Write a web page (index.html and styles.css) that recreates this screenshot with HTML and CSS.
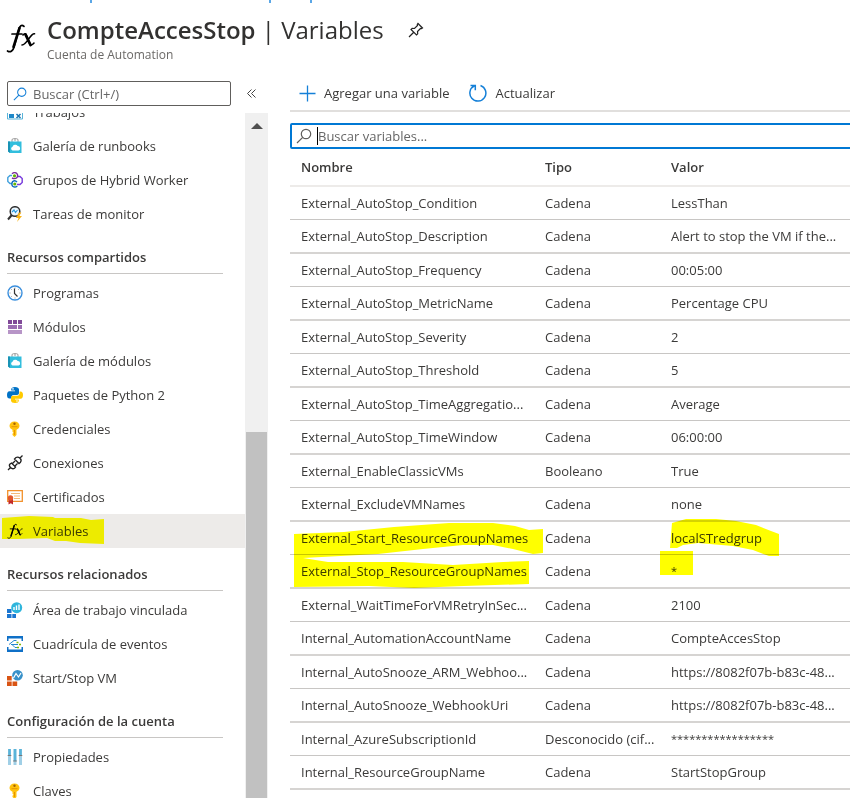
FILE: index.html
```html
<!DOCTYPE html>
<html lang="es">
<head>
<meta charset="utf-8">
<meta name="viewport" content="width=device-width, initial-scale=1">
<title>CompteAccesStop | Variables</title>
<link rel="stylesheet" href="styles.css">
</head>
<body>
<svg class="defs" aria-hidden="true">
  <defs>
    <symbol id="fx" viewBox="0 0 30 30">
      <g fill="none" stroke="currentColor" stroke-linecap="round">
        <path stroke-width="2.6" d="M13.5 5 7.5 24"/>
        <path stroke-width="1.7" d="M18 3.4C15.6 1 13.8 3 13 6L8.2 23.5C7.200 27.500 4.500 30 1.500 28M6 11h10"/>
        <path stroke-width="2.800" d="M19.500 11.500l5 10.500"/>
        <path stroke-width="1.600" d="M17 12c1.500-2 3-1.500 3.600.5l3 8c.8 2 2.400 2 4.400-.5M28.500 10.800c-4-.8-7.500 11.200-12.500 11.200"/>
      </g>
    </symbol>
    <symbol id="lens" viewBox="0 0 16 16">
      <circle cx="10" cy="6" r="4.700" fill="none" stroke="currentColor" stroke-width="1.200"/>
      <path d="M6.700 9.400 1 15" stroke="currentColor" stroke-width="1.200"/>
    </symbol>
    <symbol id="bag" viewBox="0 0 16 16">
      <path d="M5 4V2Q5 .7 6.500.7h3Q11 .7 11 2v2M8 .7V3" fill="none" stroke="#9a9a9a"/>
      <path d="M1 3.500h13.500V15H3L1 13.500z" fill="#32bedd"/><path d="M1 3.500h2V15l-2-1.500z" fill="#1a93b5"/>
      <path d="M5.500 12.500a2 2 0 0 1 0-3.800 2.900 2.900 0 0 1 5.200-.7 2.300 2.300 0 0 1 .8 4.500z" fill="#fff"/>
    </symbol>
    <symbol id="key" viewBox="0 0 16 16">
      <path d="M7.500.5c3 0 5 2 5 4.300 0 2-1.200 3.300-3 3.900v5.300L7.500 16l-2-2v-1.200l1-1-1-1V8.700c-1.800-.6-3-1.900-3-3.900 0-2.300 2-4.300 5-4.300z" fill="#ffc20e"/>
      <circle cx="7.500" cy="2.800" r="1.200" fill="#a66300"/><path d="M4.500 5.700h6M7.500 9v5" stroke="#e69500" stroke-width="1"/>
    </symbol>
  </defs>
</svg>

<div class="page">
  <svg class="ticks" width="320" height="4" aria-hidden="true"><path d="M91 0v3M270 0v3M311 0v3" stroke="#5ba7e6" stroke-width="2"/></svg>
  <header class="header">
    <svg class="header-icon" aria-hidden="true"><use href="#fx"/></svg>
    <div>
      <h1 class="title"><strong>CompteAccesStop</strong> | Variables</h1>
      <p class="subtitle">Cuenta de Automation</p>
    </div>
    <button class="icon-button pin" aria-label="Anclar">
      <svg width="16" height="16" viewBox="0 0 16 16" fill="none" stroke="#222" stroke-width="1.200"><path d="M10 1.500 14.500 6l-1 .7-1-.2-3 3 .2 2.300-1.200 1.200-5.500-5.500 1.200-1.200 2.300.2 3-3-.2-1zM5.500 10.500 1 15"/></svg>
    </button>
  </header>

  <div class="content">
    <aside class="sidebar">
      <div class="menu-search">
        <div class="search-box">
          <svg width="14" height="14" class="blue" aria-hidden="true"><use href="#lens"/></svg>
          <input type="text" placeholder="Buscar (Ctrl+/)" aria-label="Buscar en el menú">
        </div>
        <button class="icon-button" aria-label="Contraer menú">
          <svg width="9" height="9" viewBox="0 0 9 9" fill="none" stroke="#444"><path d="M4.500.5l-4 4 4 4M8.500.5l-4 4 4 4"/></svg>
        </button>
      </div>
      <div class="menu-body">
        <nav class="menu" aria-label="Menú de recursos">
          <a href="#" class="item"><svg viewBox="0 0 16 16"><path d="M.5 1h15v14H.5z" fill="#fff" stroke="#59b4d9"/><path d="M2 10h5v4H2z" fill="#1e88c9"/><path d="M9.500 10l4 4m0-4-4 4" stroke="#1673b1" stroke-width="1.500"/></svg>Trabajos</a>
          <a href="#" class="item"><svg><use href="#bag"/></svg>Galería de runbooks</a>
          <a href="#" class="item"><svg viewBox="0 0 16 16" fill="none" stroke-width="1.400"><path d="M5 3.500H3L.8 5.500v4L3 11.500h2" stroke="#41a0dc"/><path d="M11 4.500h2l2.200 2v4l-2.200 2h-3" stroke="#773adc"/><path d="M5 1.800Q7-.2 9.500 1.200 11.500 3 10 5.500 8 7.500 5 6" stroke="#7a2f9c"/><path d="M10 10Q8 7.800 5.700 9.500 4 12 5.700 14.300 8 16 10.300 14" stroke="#0f6cbd"/><circle cx="7.500" cy="3.800" r="1.600" fill="#65b500"/><circle cx="7.800" cy="12" r="1.600" fill="#65b500"/></svg>Grupos de Hybrid Worker</a>
          <a href="#" class="item"><svg viewBox="0 0 16 16"><circle cx="8" cy="5.500" r="4.800" fill="#eef8ff" stroke="#333" stroke-width="1.500"/><path d="M4.800 9 1 13.500" stroke="#333" stroke-width="2"/><path d="M5 6l2-2 1.500 2.500L10.500 4" fill="none" stroke="#2c9be0" stroke-width="1.200"/><path d="M12 6.500 9 12h2.500L10 16l5-6h-2.700l2-3.500z" fill="#fbb416"/></svg>Tareas de monitor</a>

          <h2 class="group">Recursos compartidos</h2>
          <a href="#" class="item"><svg viewBox="0 0 16 16"><circle cx="8" cy="8" r="7" fill="#fff" stroke="#3b8fdd" stroke-width="1.400"/><path d="M8 2.500v1M8 12.500v1M2.500 8h1M12.500 8h1M4 4l.7.7M11.300 4.700 12 4M4 12l.7-.7" stroke="#999"/><path d="M7.500 3.500V8.500l3 3" fill="none" stroke="#333" stroke-width="1.200"/></svg>Programas</a>
          <a href="#" class="item"><svg viewBox="0 0 16 16"><path d="M1 1h4v4H1zM6 1h4v4H6zM11 1h4v4h-4z" fill="#804998"/><path d="M1 6h9v4H1zM11 6h4v4h-4z" fill="#9b6cb2"/><path d="M1 11h14v4H1z" fill="#b795c7"/></svg>Módulos</a>
          <a href="#" class="item"><svg><use href="#bag"/></svg>Galería de módulos</a>
          <a href="#" class="item"><svg viewBox="0 0 16 16"><path d="M4.200 2.500Q4.200 0 8 0t4 2.500v3.700Q12 8 10 8H6.500Q4.500 8 4.500 10v1.500h-2Q0 11.500 0 8t2.500-3.700H8v-.8H4.200z" fill="#0072c6"/><path d="M11.800 13.500Q11.800 16 8 16t-4-2.500V10.500Q4 8.700 6 8.700h4Q12.500 8.700 12.500 6.500V4.500h1Q16 4.500 16 8t-2.500 3.700H8v.8h3.800z" fill="#ffca00"/><circle cx="6" cy="1.900" r=".8" fill="#fff"/><circle cx="10" cy="14" r=".8" fill="#fff"/></svg>Paquetes de Python 2</a>
          <a href="#" class="item"><svg><use href="#key"/></svg>Credenciales</a>
          <a href="#" class="item"><svg viewBox="0 0 16 16" fill="none" stroke="#222" stroke-width="1.300"><path d="M1 15l2.500-2.500M12.500 3.500 15.500.5M4.500 8l4 4-1 1.200Q5.500 14.500 3.500 12.500T3 9zM7.500 4l4.500 4.500 1.500-1.300Q15 5 13 3.200T9 2.500zM5.500 8.500 8 6M8 11l2.500-2.500"/></svg>Conexiones</a>
          <a href="#" class="item"><svg viewBox="0 0 16 16"><path d="M.7 1.700h14.600v10.600H.7z" fill="#fff" stroke="#f2912c" stroke-width="1.300"/><path d="M4 4.500h9M7 7h6M7 9.500h6" stroke="#f5b877"/><path d="M1.500 10h4.500v5.500l-2.200-1.300-2.300 1.300z" fill="#c12a2a"/><circle cx="3.500" cy="9" r="2.700" fill="#e2572b"/></svg>Certificados</a>
          <a href="#" class="item selected" aria-current="page"><svg class="ink"><use href="#fx"/></svg>Variables
            <svg class="marker marker-menu" viewBox="0 0 102 28" aria-hidden="true"><path d="M0 2 27 0l24 1 2 1h26l10 2 13-1v25l-24-1-14-2H53l-8-3-30 1H0z"/></svg>
          </a>

          <h2 class="group">Recursos relacionados</h2>
          <a href="#" class="item"><svg viewBox="0 0 16 16"><path d="M0 7h4.500v4H0zM0 12h4.500v4H0zM5.300 12H9v4H5.300z" fill="#1b76d1"/><circle cx="9.700" cy="5.700" r="5.500" fill="#2eb5dc"/><path d="M7 5v3M9.500 3.500V8M12 2.500V8" stroke="#fff" stroke-width="1.400"/></svg>Área de trabajo vinculada</a>
          <a href="#" class="item"><svg viewBox="0 0 16 16"><path d="M0 0h16v5h-1.500V2.500h-13V5H0zM0 11h1.500v2.500h13V11H16v5H0z" fill="#0f70c7"/><path d="M2 8.500 7 4.500h2.500M4 8.500h7M5 8.500l3 3h2" fill="none" stroke="#2388ce"/><path d="M9.500 6.500h2M12 8.500h2M10 11.500h2" stroke="#7fba00" stroke-width="1.500"/></svg>Cuadrícula de eventos</a>
          <a href="#" class="item"><svg viewBox="0 0 16 16"><path d="M0 6h4.700v4.500H0zM0 11.500h4.700V16H0zM5.500 11.500h4.700V16H5.500z" fill="#d95414"/><circle cx="10.500" cy="5.300" r="5.300" fill="#3991c9"/><path d="M6.500 8 9 3.500 11.500 7 14 3" fill="none" stroke="#fff" stroke-width="1.200"/></svg>Start/Stop VM</a>

          <h2 class="group">Configuración de la cuenta</h2>
          <a href="#" class="item"><svg viewBox="0 0 16 16"><path d="M2.500 0v16M8 0v16M13.500 0v16" stroke="#a0cfe6" stroke-width="3"/><path d="M2.500 0v6M8 0v12M13.500 0v6" stroke="#59b4d9" stroke-width="2.500"/><path d="M.7 6.500h3.600M6.200 12h3.600M11.700 6.500h3.600" stroke="#777"/></svg>Propiedades</a>
          <a href="#" class="item"><svg><use href="#key"/></svg>Claves</a>
        </nav>
        <div class="scrollbar" aria-hidden="true"><span class="arrow"></span><span class="thumb"></span></div>
      </div>
    </aside>

    <main class="main">
      <div class="toolbar">
        <button class="command"><svg width="17" height="17" viewBox="0 0 17 17" fill="none" stroke="#1580d8" stroke-width="1.300"><path d="M8.500.5v16M.5 8.500h16"/></svg>Agregar una variable</button>
        <button class="command"><svg width="18" height="18" viewBox="0 0 18 18" fill="none" stroke="#1580d8" stroke-width="1.500"><path d="M11.500 1.500a8 8 0 1 1-6 .3M1.500 1.500h4.800v4.800"/></svg>Actualizar</button>
      </div>
      <div class="filter">
        <svg width="16" height="16" class="muted" aria-hidden="true"><use href="#lens"/></svg>
        <span class="caret"></span>
        <input type="text" placeholder="Buscar variables..." aria-label="Buscar variables">
      </div>
      <table class="variables">
        <colgroup><col class="col-name"><col class="col-type"><col></colgroup>
        <thead><tr><th scope="col">Nombre</th><th scope="col">Tipo</th><th scope="col">Valor</th></tr></thead>
        <tbody>
          <tr><td>External_AutoStop_Condition</td><td>Cadena</td><td>LessThan</td></tr>
          <tr><td>External_AutoStop_Description</td><td>Cadena</td><td>Alert to stop the VM if the...</td></tr>
          <tr><td>External_AutoStop_Frequency</td><td>Cadena</td><td>00:05:00</td></tr>
          <tr><td>External_AutoStop_MetricName</td><td>Cadena</td><td>Percentage CPU</td></tr>
          <tr><td>External_AutoStop_Severity</td><td>Cadena</td><td>2</td></tr>
          <tr><td>External_AutoStop_Threshold</td><td>Cadena</td><td>5</td></tr>
          <tr><td>External_AutoStop_TimeAggregatio...</td><td>Cadena</td><td>Average</td></tr>
          <tr><td>External_AutoStop_TimeWindow</td><td>Cadena</td><td>06:00:00</td></tr>
          <tr><td>External_EnableClassicVMs</td><td>Booleano</td><td>True</td></tr>
          <tr><td>External_ExcludeVMNames</td><td>Cadena</td><td>none</td></tr>
          <tr><td>External_Start_ResourceGroupNames<svg class="marker marker-names" viewBox="0 0 249 68" aria-hidden="true"><path d="M0 12 50 10 100 5 155 1h44l22 3 14 4 14-1v24l-10 1-20-5-20-4h-30l-40 4-45 5-75 4 25 4h75l50 3 50-3 26-1v23l-65 2-50 2-45-2-75 1-25-6-9 0z"/></svg></td><td>Cadena</td><td>localSTredgrup<svg class="marker marker-value" viewBox="0 0 119 58" aria-hidden="true"><path d="M12 5 26 1h30l20 2 20 4 15 6 8 3v22h-10l-16-6-20-4-35-3-15 2-6 3h-7zM0 33h33v24H0z"/></svg></td></tr>
          <tr><td>External_Stop_ResourceGroupNames</td><td>Cadena</td><td class="stars">*</td></tr>
          <tr><td>External_WaitTimeForVMRetryInSec...</td><td>Cadena</td><td>2100</td></tr>
          <tr><td>Internal_AutomationAccountName</td><td>Cadena</td><td>CompteAccesStop</td></tr>
          <tr><td>Internal_AutoSnooze_ARM_Webhoo...</td><td>Cadena</td><td>https://8082f07b-b83c-48...</td></tr>
          <tr><td>Internal_AutoSnooze_WebhookUri</td><td>Cadena</td><td>https://8082f07b-b83c-48...</td></tr>
          <tr><td>Internal_AzureSubscriptionId</td><td>Desconocido (cif...</td><td class="stars">*****************</td></tr>
          <tr><td>Internal_ResourceGroupName</td><td>Cadena</td><td>StartStopGroup</td></tr>
        </tbody>
      </table>
    </main>
  </div>
</div>
</body>
</html>
```
FILE: styles.css
```css
* { box-sizing: border-box; }
body {
  margin: 0;
  font: 13px/20px "Open Sans", "Noto Sans", sans-serif;
  color: #3b3a39;
  background: #fff;
}
h1, h2, p { margin: 0; }
a { color: inherit; text-decoration: none; }
button, input { font: inherit; color: inherit; border: 0; padding: 0; background: none; }
input { flex: 1; min-width: 0; outline: 0; }
input::placeholder { color: #666; opacity: 1; }
.defs { position: absolute; width: 0; height: 0; }
.page { display: flex; flex-direction: column; height: 100vh; overflow: hidden; }
.ticks { display: block; flex: none; }

.header { display: flex; gap: 11px; height: 72px; padding: 10px 6px 0; flex: none; }
.header-icon { width: 30px; height: 32px; margin-top: 8px; color: #000; }
.title { font-size: 24px; line-height: 32px; font-weight: 400; white-space: nowrap; color: #323130; }
.title strong { font-weight: 600; }
.subtitle { font-size: 12px; line-height: 18px; color: #6b6967; }
.icon-button { display: flex; align-items: center; }
.pin { height: 32px; margin-left: 13px; }

.content { display: flex; flex: 1; min-height: 0; }
.sidebar { display: flex; flex-direction: column; flex: 0 0 268px; margin-right: 22px; }
.menu-search { display: flex; gap: 16px; padding: 5px 7px 7px; flex: none; }
.search-box { display: flex; align-items: center; gap: 6px; width: 224px; height: 25px; padding: 0 5px; border: 1px solid #605e5c; border-radius: 2px; }
.blue { color: #1580d8; }
.muted { color: #605e5c; }
.menu-body { display: flex; flex: 1; min-height: 0; }
.menu { flex: 1; overflow: hidden; }
.item { position: relative; display: flex; align-items: center; gap: 10px; height: 34px; padding-left: 7px; white-space: nowrap; }
.item > svg:first-child { width: 16px; height: 16px; flex: none; }
.item:first-child { margin-top: -18px; }
.item .ink { color: #000; }
.selected { background: #edebe9; }
.group { height: 43px; margin: 0 22px 2px 7px; padding-top: 16px; border-bottom: 1px solid #c8c6c4; font-size: 13px; line-height: 20px; font-weight: 600; white-space: nowrap; }
.scrollbar { position: relative; width: 23px; background: #f0f0f0; }
.arrow { display: block; margin: 10px auto 0; width: 0; border: 6px solid transparent; border-top: 0; border-bottom-color: #505050; }
.thumb { position: absolute; inset: 46.5% 1px 0; background: #c1c1c1; }

.main { flex: 1; min-width: 0; }
.toolbar { display: flex; gap: 20px; height: 36px; padding: 0 9px; border-bottom: 2px solid #e1dfdd; }
.command { display: flex; align-items: center; gap: 8px; white-space: nowrap; }
.filter { display: flex; align-items: center; height: 26px; margin-top: 11px; margin-right: -4px; padding-left: 4px; border: 2px solid #0078d4; border-radius: 2px; }
.caret { width: 1px; height: 18px; margin-left: 5px; background: #000; }

.variables { width: 100%; table-layout: fixed; border-collapse: separate; border-spacing: 0; }
.col-name { width: 244px; }
.col-type { width: 126px; }
.variables th, .variables td { height: 33px; padding: 0 0 0 11px; text-align: left; white-space: nowrap; border-bottom: 1px solid #c8c6c4; }
.variables th { height: 38px; font-weight: 600; border-bottom: 2px solid #edebe9; }
.variables td { position: relative; }
.variables tr:nth-child(even) td { height: 34px; border-bottom: 2px solid #d6d4d2; }
.variables .stars { font-size: 11px; }

.marker { position: absolute; z-index: 1; fill: #ff0; mix-blend-mode: multiply; pointer-events: none; }
.marker-menu { left: 2px; top: 2px; width: 102px; height: 28px; }
.marker-names { left: 4px; top: 0; width: 249px; height: 68px; }
.marker-value { left: 0; top: -4px; width: 119px; height: 58px; }
```
